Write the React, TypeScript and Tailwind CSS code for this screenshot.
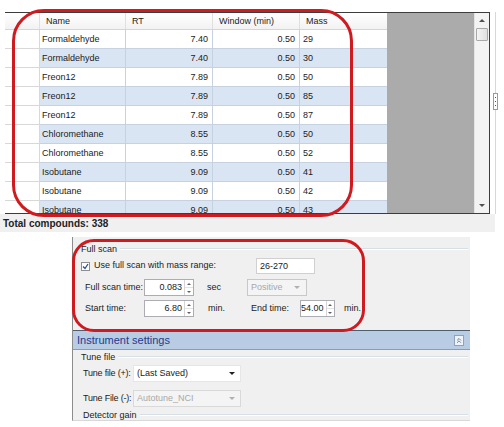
import { ChevronsUp } from 'lucide-react'

const rows = [
  ['Formaldehyde', '7.40', '0.50', '29'],
  ['Formaldehyde', '7.40', '0.50', '30'],
  ['Freon12', '7.89', '0.50', '50'],
  ['Freon12', '7.89', '0.50', '85'],
  ['Freon12', '7.89', '0.50', '87'],
  ['Chloromethane', '8.55', '0.50', '50'],
  ['Chloromethane', '8.55', '0.50', '52'],
  ['Isobutane', '9.09', '0.50', '41'],
  ['Isobutane', '9.09', '0.50', '42'],
  ['Isobutane', '9.09', '0.50', '43'],
]

function Spinner({ value, width }: { value: string; width: string }) {
  return (
    <div className={`${width} shrink-0 h-[17px] flex bg-white border border-[#abadb3]`}>
      <div className="flex-1 text-right pr-[2px] leading-[15px]">{value}</div>
      <div className="w-[9px] flex flex-col border-l border-[#d5d5d5]">
        <div className="flex-1 flex items-center justify-center border-b border-[#e2e2e2]">
          <div className="w-0 h-0 border-l-[2px] border-r-[2px] border-b-[2px] border-l-transparent border-r-transparent border-b-[#606060]" />
        </div>
        <div className="flex-1 flex items-center justify-center">
          <div className="w-0 h-0 border-l-[2px] border-r-[2px] border-t-[2px] border-l-transparent border-r-transparent border-t-[#606060]" />
        </div>
      </div>
    </div>
  )
}

function Caret({ color }: { color: string }) {
  return (
    <div className={`w-0 h-0 border-l-[3px] border-r-[3px] border-t-[3px] border-l-transparent border-r-transparent ${color}`} />
  )
}

function GroupLabel({ text, pad }: { text: string; pad: string }) {
  return (
    <div className={`h-[12px] flex items-center gap-[3px] ${pad} pr-[2px]`}>
      <span className="leading-[12px] whitespace-nowrap">{text}</span>
      <div className="flex-1 h-[2px] border-t border-[#d5dfe5] border-b border-b-white" />
    </div>
  )
}

export default function App() {
  return (
    <div className="w-[504px] h-[427px] relative overflow-hidden bg-white text-[9px] text-[#1b1b1b] whitespace-nowrap [font-family:'Liberation_Sans',Arial,sans-serif]">
      {/* Compound table */}
      <div className="flex pt-[12px]">
        <div className="ml-[5px] w-[485px] h-[202px] flex border-t border-b border-r border-[#3c3c3c] bg-white">
          <div className="w-[382px] flex flex-col overflow-hidden">
            {/* header */}
            <div className="h-[17px] flex shrink-0 border-b border-[#d5d5d5] bg-gradient-to-b from-white to-[#f2f2f2]">
              <div className="w-[35px] border-r border-[#e0e0e0]" />
              <div className="w-[86px] pl-[6px] leading-[16px] border-r border-[#e0e0e0]">Name</div>
              <div className="w-[87px] pl-[6px] leading-[16px] border-r border-[#e0e0e0]">RT</div>
              <div className="w-[87px] pl-[6px] leading-[16px] border-r border-[#e0e0e0]">Window (min)</div>
              <div className="w-[87px] pl-[6px] leading-[16px]">Mass</div>
            </div>
            {rows.map((r, i) => (
              <div key={i} className="h-[19px] flex shrink-0">
                <div className="w-[35px] border-b border-r border-[#d8d8d8] bg-white" />
                <div className={`flex-1 flex border-b border-[#c6d2e0] ${i % 2 ? 'bg-[#dae5f3]' : 'bg-white'}`}>
                  <div className="w-[86px] pl-[2px] leading-[18px] border-r border-[#c6d2e0]">{r[0]}</div>
                  <div className="w-[87px] pr-[4px] text-right leading-[18px] border-r border-[#c6d2e0]">{r[1]}</div>
                  <div className="w-[87px] pr-[4px] text-right leading-[18px] border-r border-[#c6d2e0]">{r[2]}</div>
                  <div className="w-[86px] pl-[3px] leading-[18px]">{r[3]}</div>
                </div>
              </div>
            ))}
          </div>
          <div className="w-[87px] bg-[#ababab]" />
          {/* scrollbar */}
          <div className="w-[15px] flex flex-col bg-[#f3f3f3] border-l border-[#e4e4e4]">
            <div className="h-[15px] flex items-center justify-center">
              <div className="w-0 h-0 border-l-[3px] border-r-[3px] border-b-[3px] border-l-transparent border-r-transparent border-b-[#505050]" />
            </div>
            <div className="h-[13px] mx-[1px] border border-[#a8a8a8] rounded-[1px] bg-gradient-to-r from-[#f4f4f4] to-[#e0e0e0]" />
            <div className="flex-1" />
            <div className="h-[15px] flex items-center justify-center">
              <Caret color="border-t-[#505050]" />
            </div>
          </div>
        </div>
        <div className="w-[14px] h-[202px] flex">
          <div className="w-[5px]" />
          <div className="w-px bg-[#d7d7d7]" />
        </div>
      </div>

      {/* splitter grip */}
      <div className="absolute left-[493px] top-[93px] w-[5px] h-[17px] border border-[#9a9a9a] bg-white flex flex-col items-center justify-center gap-[3px]">
        <div className="w-px h-px bg-[#555]" />
        <div className="w-px h-px bg-[#555]" />
        <div className="w-px h-px bg-[#555]" />
      </div>

      {/* total */}
      <div className="w-[495px] h-[18px] bg-[#f0f0f0] pl-[3px] flex items-center">
        <span className="text-[10px] font-bold text-[#222]">Total compounds: 338</span>
      </div>

      {/* settings panel */}
      <div className="mt-[5px] ml-[72px] w-[398px] h-[184px] bg-[#f0f0f0] border-l border-[#8c8c8c] border-b border-b-[#d8d8d8] flex flex-col">
        <div className="pt-[6px]">
          <GroupLabel text="Full scan" pad="pl-[8px]" />
        </div>
        {/* check row */}
        <div className="mt-[3px] h-[16px] flex items-center">
          <div className="ml-[8px] shrink-0 w-[9px] h-[9px] bg-white border border-[#8f8f8f] flex items-center justify-center">
            <svg width="7" height="7" viewBox="0 0 7 7">
              <path d="M1 3.5 L3 5.5 L6 1" stroke="#2a4f9a" strokeWidth="1.3" fill="none" />
            </svg>
          </div>
          <span className="ml-[4px] w-[160px] shrink-0">Use full scan with mass range:</span>
          <div className="ml-[2px] shrink-0 w-[59px] h-[16px] bg-white border border-[#d0d0d0] pl-[3px] leading-[14px]">26-270</div>
        </div>
        {/* full scan time */}
        <div className="mt-[5px] h-[17px] flex items-center">
          <span className="ml-[12px] w-[59px] shrink-0">Full scan time:</span>
          <Spinner value="0.083" width="w-[50px]" />
          <span className="ml-[13px] w-[40px] shrink-0">sec</span>
          <div className="w-[60px] shrink-0 h-[17px] border border-[#c8c8c8] bg-[#f4f4f4] flex items-center pl-[3px] pr-[6px] text-[#a8a8a8]">
            <span className="flex-1">Positive</span>
            <Caret color="border-t-[#b0b0b0]" />
          </div>
        </div>
        {/* start / end time */}
        <div className="mt-[4px] h-[17px] flex items-center">
          <span className="ml-[12px] w-[59px] shrink-0">Start time:</span>
          <Spinner value="6.80" width="w-[50px]" />
          <span className="ml-[14px] w-[39px] shrink-0">min.</span>
          <span className="ml-[4px] w-[49px] shrink-0">End time:</span>
          <Spinner value="54.00" width="w-[35px]" />
          <span className="ml-[9px]">min.</span>
        </div>

        {/* instrument settings band */}
        <div className="mt-[13px] h-[20px] shrink-0 bg-[#b8cce4] border-t border-[#4e5d70] border-b border-b-[#8b9bb0] flex items-center pl-[4px] pr-[6px]">
          <span className="flex-1 text-[11px] text-[#1f3b8e]">Instrument settings</span>
          <div className="w-[10px] h-[11px] bg-[#eef3fa] border border-[#8ea2bc] flex items-center justify-center">
            <ChevronsUp size={9} strokeWidth={2} color="#3a4a60" />
          </div>
        </div>
        <div className="pt-[1px]">
          <GroupLabel text="Tune file" pad="pl-[8px]" />
        </div>
        <div className="mt-[2px] h-[17px] flex items-center">
          <span className="ml-[10px] w-[50px] shrink-0 tracking-[-0.2px]">Tune file (+):</span>
          <div className="w-[108px] shrink-0 h-[17px] bg-white border border-[#e6e6e6] flex items-center pl-[3px] pr-[5px]">
            <span className="flex-1">(Last Saved)</span>
            <Caret color="border-t-[#222]" />
          </div>
        </div>
        <div className="mt-[8px] h-[17px] flex items-center">
          <span className="ml-[10px] w-[50px] shrink-0 tracking-[-0.2px]">Tune File (-):</span>
          <div className="w-[108px] shrink-0 h-[17px] bg-[#f4f4f4] border border-[#d9d9d9] flex items-center pl-[3px] pr-[5px] text-[#a8a8a8]">
            <span className="flex-1">Autotune_NCI</span>
            <Caret color="border-t-[#b0b0b0]" />
          </div>
        </div>
        <div className="mt-[2px]">
          <GroupLabel text="Detector gain" pad="pl-[10px]" />
        </div>
      </div>

      {/* red annotations */}
      <div className="absolute left-[12px] top-[9px] w-[341px] h-[208px] border-[3px] border-[#cf1a1f] rounded-[32px]" />
      <div className="absolute left-[72px] top-[239px] w-[293px] h-[93px] border-[3px] border-[#cf1a1f] rounded-[22px]" />
    </div>
  )
}
